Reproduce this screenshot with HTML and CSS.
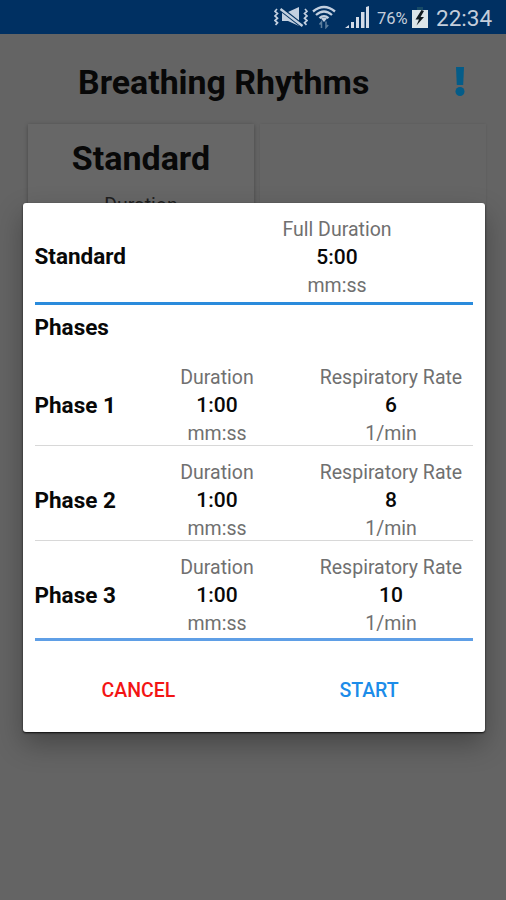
FILE: index.html
```html
<!DOCTYPE html>
<html lang="en">
<head>
<meta charset="utf-8">
<title>Breathing Rhythms</title>
<link rel="stylesheet" href="styles.css">
</head>
<body>
<div class="status">
  <svg class="mute" width="34" height="22" viewBox="0 0 34 22" fill="none" stroke="#c3d0e0" stroke-width="1.7">
    <path d="M3 2l-2 2.300 2.500 2.300-2.500 2.300 2.500 2.300-2.500 2.300 2.500 2.300-2 2M31 2l2 2.300-2.500 2.300 2.500 2.300-2.500 2.300 2.500 2.300-2.500 2.300 2 2"/>
    <path d="M8 5h6L25 0v19l-11-5H8z" fill="#c3d0e0" stroke="none"/>
    <path d="M5.500 1l23 18" stroke="#00305f" stroke-width="4.500"/>
    <path d="M6.500 2l22 17" stroke-width="2.300"/>
  </svg>
  <svg class="wifi" width="24" height="24" viewBox="0 0 24 24" fill="none" stroke="#c3d0e0" stroke-width="2.300">
    <path d="M1 6.500Q12-2.500 23 6.500M4 10Q12 3 20 10M7.500 13.200Q12 9 16.500 13.200"/>
    <path d="M9 13.500Q12 11.500 15 13.500L12 17z" fill="#c3d0e0" stroke="none"/>
    <path d="M9.500 23v-6l-2 2.500M14 16.500v6l2.200-2.500" stroke="#5d7e9d" stroke-width="1.500"/>
  </svg>
  <svg class="signal" width="25" height="22" viewBox="0 0 25 22" fill="#d3dbe7">
    <path d="M0 22l4-3v3zM6 16h3v6H6zM11 11h3v11h-3zM16 6h3.500v16H16zM21 1l3-1v22h-3z"/>
  </svg>
  <span class="percent">76%</span>
  <svg class="battery" width="16" height="21" viewBox="0 0 16 21">
    <path d="M5 0h6v3H5z" fill="#174a66"/>
    <path d="M0 3h16v18H0z" fill="#dce5e9"/>
    <path d="M9.500 3L3.500 12.500h3.500L4.500 18.500 12 10H8.500l3.500-6z" fill="#101a20"/>
  </svg>
  <span class="clock">22:34</span>
</div>
<main class="screen">
  <header class="top">
    <h1>Breathing Rhythms</h1>
    <svg class="alert" width="10" height="30" viewBox="0 0 10 30" fill="#045c88">
      <path d="M1 0h8l-.8 18H1.800z"/><circle cx="5" cy="24.500" r="4.500"/>
    </svg>
  </header>
  <div class="cards">
    <section class="card"><h2>Standard</h2><p>Duration</p></section>
    <section class="card empty"></section>
  </div>
</main>
<div class="dialog" role="dialog">
  <div class="row full">
    <strong>Standard</strong>
    <div class="field"><span>Full Duration</span><b>5:00</b><span>mm:ss</span></div>
  </div>
  <h3>Phases</h3>
  <div class="row">
    <strong>Phase 1</strong>
    <div class="field"><span>Duration</span><b>1:00</b><span>mm:ss</span></div>
    <div class="field"><span>Respiratory Rate</span><b>6</b><span>1/min</span></div>
  </div>
  <div class="row">
    <strong>Phase 2</strong>
    <div class="field"><span>Duration</span><b>1:00</b><span>mm:ss</span></div>
    <div class="field"><span>Respiratory Rate</span><b>8</b><span>1/min</span></div>
  </div>
  <div class="row last">
    <strong>Phase 3</strong>
    <div class="field"><span>Duration</span><b>1:00</b><span>mm:ss</span></div>
    <div class="field"><span>Respiratory Rate</span><b>10</b><span>1/min</span></div>
  </div>
  <div class="actions">
    <button class="cancel">CANCEL</button>
    <button class="start">START</button>
  </div>
</div>
</body>
</html>
```
FILE: styles.css
```css
* { box-sizing: border-box; }
body {
  margin: 0;
  width: 506px;
  height: 900px;
  overflow: hidden;
  position: relative;
  background: #646464;
  font-family: Roboto, sans-serif;
  color: #080808;
}
h1, h2, h3, p { margin: 0; }
.status {
  display: flex;
  height: 34px;
  background: #003062;
  padding-left: 274px;
  color: #c5cedb;
}
.status svg { flex: none; }
.mute { margin-top: 7px; }
.wifi { margin: 5px 0 0 4px; }
.signal { margin: 6px 0 0 9px; }
.percent { margin-left: 7px; width: 34px; font-size: 16.5px; line-height: 37px; }
.battery { margin: 7px 0 0 1px; }
.clock { margin-left: 8px; font-size: 22.5px; line-height: 37px; }
.top { display: flex; height: 90px; padding: 29px 0 0 78px; }
h1 { font-size: 33.9px; line-height: 40px; width: 377px; white-space: nowrap; }
.alert { margin-top: 4px; }
.cards { display: flex; gap: 6px; padding-left: 28px; }
.card {
  width: 226px;
  height: 340px;
  padding-top: 14px;
  background: #676767;
  text-align: center;
  box-shadow: 0 1px 4px rgba(0, 0, 0, .3);
}
.card.empty { box-shadow: 0 0 2px rgba(0, 0, 0, .1); background: #656565; }
h2 { font-size: 34px; line-height: 40px; }
.card p { margin-top: 14px; font-size: 19.5px; line-height: 28px; color: #202020; }
.dialog {
  position: absolute;
  left: 23px;
  top: 203px;
  width: 461.5px;
  height: 528.5px;
  padding: 12px 11.5px 0;
  background: #fff;
  border-radius: 3px;
  box-shadow: 0 1px 2px rgba(0, 0, 0, .85), 0 12px 28px rgba(0, 0, 0, .3);
}
.row {
  display: grid;
  grid-template-columns: 90.5px 184px 164px;
  align-items: start;
  height: 95px;
  padding-top: 12px;
  border-bottom: 1px solid #d8d8d8;
}
.row.full {
  grid-template-columns: 166.5px 272px;
  height: 90px;
  padding: 0;
  border-bottom: 3px solid #2a8bdc;
}
.row.last { height: 100px; border-bottom: 3px solid #5f9fe6; }
.row strong, h3 { font-size: 22.5px; font-weight: 700; line-height: 28px; white-space: nowrap; }
.row strong { padding-top: 28px; }
.row.full strong { padding-top: 27px; }
h3 { margin: 8px 0 10px; }
.field { display: flex; flex-direction: column; text-align: center; }
.field span, .field b { font-size: 19.5px; line-height: 28px; white-space: nowrap; }
.field span { padding-top: 2px; line-height: 26px; color: #707070; }
.field b { font-size: 21px; font-weight: 500; color: #080808; }
.actions { display: flex; justify-content: space-between; padding-top: 35px; }
button {
  width: 208px;
  padding: 0;
  border: 0;
  background: none;
  font: 500 19.5px/30px Roboto, sans-serif;
}
.cancel { color: #f31414; }
.start { color: #1c8ce9; }
```
